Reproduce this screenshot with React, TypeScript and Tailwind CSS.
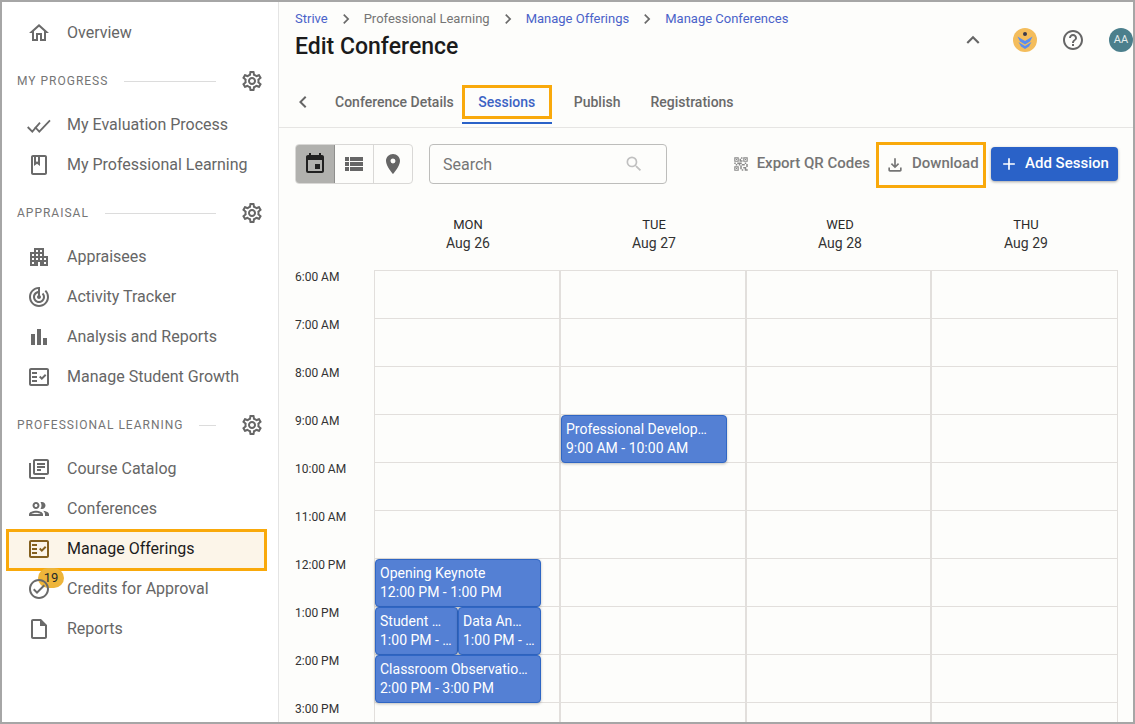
import React from "react";
import {
  MdOutlineHome, MdOutlineBook, MdOutlineSettings, MdApartment, MdTrackChanges, MdBarChart,
  MdOutlineFactCheck, MdOutlineLibraryBooks, MdOutlinePeople, MdOutlineCheckCircle,
  MdOutlineInsertDriveFile, MdChevronLeft, MdChevronRight, MdKeyboardArrowUp, MdHelpOutline,
  MdEvent, MdViewList, MdLocationOn, MdSearch, MdQrCode2, MdOutlineFileDownload, MdAdd,
} from "react-icons/md";

type IconT = React.ComponentType<{ size?: number; className?: string }>;

function DoubleCheck({ size = 24, className = "" }: { size?: number; className?: string }) {
  return (
    <svg width={size} height={size} viewBox="0 0 24 24" fill="none" stroke="currentColor" strokeWidth="1.8" className={className}>
      <polyline points="0.7,14 5.3,18.7 13,9.7" />
      <polyline points="8,14 12.3,18.7 23,7.3" />
    </svg>
  );
}

function NavItem({ icon: Icon, label, active, badge }: { icon: IconT; label: string; active?: boolean; badge?: string }) {
  return (
    <div className="relative flex h-10 items-center">
      {active && <div className="absolute left-[4px] top-0 h-[42px] w-[261px] border-[3px] border-[#f9a90b] bg-[#fcf5e9]" />}
      {badge && (
        <div className="absolute left-[36px] top-[-1px] flex h-[20px] w-[26px] items-center justify-center rounded-full bg-[#eeb53a] text-[13px] text-[#1f2a2a]">
          {badge}
        </div>
      )}
      <div className="relative flex w-[65px] justify-end pr-[16px]">
        <Icon size={24} className={active ? "text-[#84601f]" : "text-[#6a6a6a]"} />
      </div>
      <span className={`relative text-base ${active ? "text-[#1c1c1c]" : "text-[#666666]"}`}>{label}</span>
    </div>
  );
}

function Section({ label }: { label: string }) {
  return (
    <div className="mt-2 mb-1 flex h-10 items-center pl-[15px]">
      <span className="whitespace-nowrap text-xs tracking-[1px] text-[#757575]">{label}</span>
      <div className="ml-4 h-px flex-1 bg-[#dcdcdc]" />
      <MdOutlineSettings size={24} className="ml-[24px] mr-[14px] text-[#666666]" />
    </div>
  );
}

function Crumb({ label, link, last }: { label: string; link?: boolean; last?: boolean }) {
  return (
    <>
      <span className={`text-[13px] ${link ? "text-[#4a62c9]" : "text-[#757575]"}`}>{label}</span>
      {!last && <MdChevronRight size={20} className="mx-[8px] text-[#6a6a6a]" />}
    </>
  );
}

function Event({ title, time, cls }: { title: string; time: string; cls: string }) {
  return (
    <div className={`absolute h-[48px] overflow-hidden rounded border border-[#2f66c4] bg-[#5480d4] py-[4px] pl-[4px] pr-[5px] text-sm leading-[19px] text-white shadow-[0_1px_3px_rgba(0,0,0,0.25)] ${cls}`}>
      <div className="truncate pr-[6px]">{title}</div>
      <div className="truncate">{time}</div>
    </div>
  );
}

const times = ["6:00 AM", "7:00 AM", "8:00 AM", "9:00 AM", "10:00 AM", "11:00 AM", "12:00 PM", "1:00 PM", "2:00 PM", "3:00 PM"];
const days: [string, string][] = [["MON", "Aug 26"], ["TUE", "Aug 27"], ["WED", "Aug 28"], ["THU", "Aug 29"]];

export default function App() {
  return (
    <div className="flex h-[724px] w-[1135px] overflow-hidden border-2 border-[#a6a6a6] bg-white [font-family:Roboto,sans-serif]">
      <aside className="w-[277px] shrink-0 border-r border-[#e4e4e4] bg-white pt-[11px]">
        <NavItem icon={MdOutlineHome} label="Overview" />
        <Section label="MY PROGRESS" />
        <NavItem icon={DoubleCheck} label="My Evaluation Process" />
        <NavItem icon={MdOutlineBook} label="My Professional Learning" />
        <Section label="APPRAISAL" />
        <NavItem icon={MdApartment} label="Appraisees" />
        <NavItem icon={MdTrackChanges} label="Activity Tracker" />
        <NavItem icon={MdBarChart} label="Analysis and Reports" />
        <NavItem icon={MdOutlineFactCheck} label="Manage Student Growth" />
        <Section label="PROFESSIONAL LEARNING" />
        <NavItem icon={MdOutlineLibraryBooks} label="Course Catalog" />
        <NavItem icon={MdOutlinePeople} label="Conferences" />
        <NavItem icon={MdOutlineFactCheck} label="Manage Offerings" active />
        <NavItem icon={MdOutlineCheckCircle} label="Credits for Approval" badge="19" />
        <NavItem icon={MdOutlineInsertDriveFile} label="Reports" />
      </aside>

      <main className="min-w-0 flex-1 overflow-hidden bg-[#fdfdfb]">
        <div className="flex h-[82px] items-start justify-between pl-4">
          <div>
            <div className="mt-[7px] flex h-[20px] items-center">
              <Crumb label="Strive" link />
              <Crumb label="Professional Learning" />
              <Crumb label="Manage Offerings" link />
              <Crumb label="Manage Conferences" link last />
            </div>
            <h1 className="mt-[2px] text-[23px] font-medium leading-[32px] text-[#1b1b1b]">Edit Conference</h1>
          </div>
          <div className="mt-[25px] flex items-center">
            <MdKeyboardArrowUp size={26} className="text-[#666666]" />
            <svg width="24" height="24" viewBox="0 0 24 24" className="ml-[27px]">
              <circle cx="12" cy="12" r="12" fill="#f4bd5c" />
              <circle cx="12" cy="6" r="2" fill="#3c3a4a" />
              <path d="M4.5 8.5 L12 13 L19.5 8.5 L17 13.5 L12 16.5 L7 13.5 Z" fill="#5b8def" />
              <path d="M5.5 14 L12 18 L18.5 14 L16 18.5 L12 21 L8 18.5 Z" fill="#5b8def" />
            </svg>
            <MdHelpOutline size={24} className="ml-[24px] text-[#666666]" />
            <div className="ml-[24px] flex h-6 w-6 items-center justify-center rounded-full bg-[#4b7f8c] text-[11px] text-[#e6eeee]">AA</div>
          </div>
        </div>

        <div className="flex h-[44px] items-start border-b border-[#e6e5e3] text-sm font-medium text-[#6a6a6a]">
          <div className="flex h-[36px] items-center"><MdChevronLeft size={24} className="ml-[12px] text-[#666666]" /></div>
          <span className="ml-[20px] flex h-[36px] items-center">Conference Details</span>
          <div className="ml-[8px] mt-[1px] h-[39px] w-[90px] border-b-[2px] border-[#2a62c8]">
            <div className="flex h-[34px] w-[90px] items-center justify-center border-[3px] border-[#f9a90b] text-[#3c63c4]">Sessions</div>
          </div>
          <span className="ml-[22px] flex h-[36px] items-center">Publish</span>
          <span className="ml-[30px] flex h-[36px] items-center">Registrations</span>
        </div>

        <div className="flex h-[73px] items-start pl-4 pr-[15px] pt-[16px]">
          <div className="flex h-10 w-[118px] overflow-hidden rounded border border-[#d9d8d6]">
            <div className="flex w-[39px] items-center justify-center border-r border-[#8f8f8d] bg-[#b1b1ae]"><MdEvent size={24} className="text-[#202020]" /></div>
            <div className="flex w-[39px] items-center justify-center border-r border-[#d9d8d6]"><MdViewList size={24} className="text-[#666666]" /></div>
            <div className="flex flex-1 items-center justify-center"><MdLocationOn size={24} className="text-[#666666]" /></div>
          </div>
          <div className="ml-4 flex h-10 w-[238px] items-center justify-between rounded border border-[#bdbdbb] pl-[13px] pr-[22px]">
            <span className="pt-[2px] text-base text-[#767676]">Search</span>
            <MdSearch size={20} className="text-[#c0c0c0]" />
          </div>
          <div className="ml-auto flex h-10 items-center text-[15px] font-medium text-[#757575]">
            <MdQrCode2 size={18} className="text-[#8a8a8a]" />
            <span className="ml-[7px] pb-[2px]">Export QR Codes</span>
            <div className="ml-[6px] mt-[2px] flex h-[46px] w-[110px] items-center border-[3px] border-[#f9a90b] pl-[6px]">
              <MdOutlineFileDownload size={20} className="text-[#757575]" />
              <span className="ml-[7px] pb-[4px]">Download</span>
            </div>
            <div className="ml-[5px] flex h-[34px] w-[127px] items-center rounded bg-[#2a62c8] pl-[8px] text-white shadow-[0_1px_3px_rgba(0,0,0,0.35)]">
              <MdAdd size={20} />
              <span className="ml-[6px] pb-[2px]">Add Session</span>
            </div>
          </div>
        </div>

        <div className="flex pl-4 pr-[15px]">
          <div className="w-[79px] shrink-0 pt-[68px]">
            {times.map((t) => (
              <div key={t} className="h-12 text-xs leading-[16px] text-[#333333]">{t}</div>
            ))}
          </div>
          <div className="w-[744px]">
            <div className="grid h-[69px] grid-cols-4 pt-[14px] text-center">
              {days.map(([d, date]) => (
                <div key={d} className="pl-[2px]">
                  <div className="text-[13px] leading-[19px] text-[#2a2a2a]">{d}</div>
                  <div className="text-sm leading-[18px] text-[#333333]">{date}</div>
                </div>
              ))}
            </div>
            <div className="relative grid grid-cols-4 border-l border-t border-[#e2dfdc]">
              {Array.from({ length: 40 }).map((_, i) => (
                <div key={i} className={`h-12 border-b border-[#e2dfdc] ${i % 4 === 3 ? "border-r" : "border-r-2"} border-r-[#e2dfdc]`} />
              ))}
              <Event title="Professional Development Day" time="9:00 AM - 10:00 AM" cls="left-[186px] top-[144px] w-[166px]" />
              <Event title="Opening Keynote" time="12:00 PM - 1:00 PM" cls="left-0 top-[288px] w-[166px]" />
              <Event title="Student Engagement" time="1:00 PM - 2:00 PM" cls="left-0 top-[336px] w-[83px]" />
              <Event title="Data Analysis" time="1:00 PM - 2:00 PM" cls="left-[83px] top-[336px] w-[83px]" />
              <Event title="Classroom Observation Tools" time="2:00 PM - 3:00 PM" cls="left-0 top-[384px] w-[166px]" />
            </div>
          </div>
        </div>
      </main>
    </div>
  );
}
